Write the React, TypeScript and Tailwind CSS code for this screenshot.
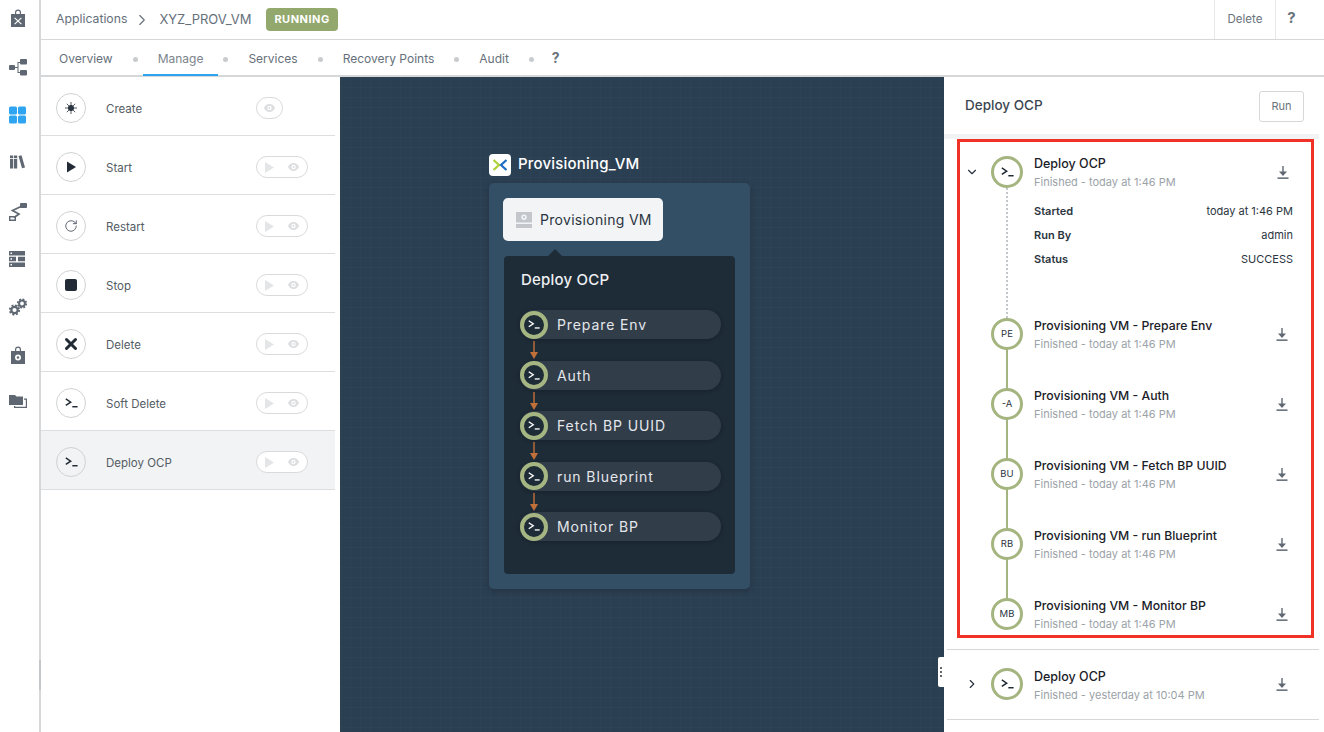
import React from 'react';
import { ChevronDown, ChevronRight, RotateCw, X } from 'lucide-react';

const tabs = ['Overview', 'Manage', 'Services', 'Recovery Points', 'Audit'];

function Terminal({ className = '' }: { className?: string }) {
    return (
        <svg viewBox="0 0 16 12" className={className} fill="none" stroke="currentColor" strokeWidth="1.8">
            <path d="M1 1 L7 5 L1 9" strokeLinejoin="miter" />
            <path d="M9 10.600 H15.500" />
        </svg>
    );
}

function Play({ className = '' }: { className?: string }) {
    return (
        <svg viewBox="0 0 10 12" className={className} fill="currentColor">
            <path d="M0 0 L10 6 L0 12 Z" />
        </svg>
    );
}

function SmallEye() {
    return (
        <svg viewBox="0 0 14 10" className="w-[11px] h-[8px] text-[#dcdee0]" fill="currentColor">
            <path fillRule="evenodd" d="M7 0C3.8 0 1.2 2 0 5c1.2 3 3.8 5 7 5s5.8-2 7-5c-1.200-3-3.800-5-7-5zm0 2.200a2.800 2.800 0 1 1 0 5.600 2.800 2.800 0 0 1 0-5.600z" />
            <circle cx="7" cy="5" r="1.300" />
        </svg>
    );
}

function DownloadIcon({ className = '' }: { className?: string }) {
    return (
        <svg viewBox="0 0 12 13" className={`w-[12px] h-[13px] shrink-0 text-[#5f6872] ${className}`} fill="currentColor">
            <rect x="5.300" y="0" width="1.400" height="6" />
            <path d="M2 5.500h8l-4 4.500z" />
            <rect x="0.500" y="11.400" width="11" height="1.500" />
        </svg>
    );
}

function RailIcon({ children, active = false, nudge = '' }: { children: React.ReactNode; active?: boolean; nudge?: string }) {
    return (
        <div className={`h-[48.5px] flex items-center justify-center pr-[3px] ${active ? 'text-[#2fa4f0]' : 'text-[#5f6872]'}`}>
            <svg viewBox="0 0 18 18" className={`w-[18px] h-[18px] ${nudge}`} fill="currentColor">
                {children}
            </svg>
        </div>
    );
}

function Rail() {
    return (
        <div className="w-[41px] shrink-0 border-r-2 border-[#d5d7d9] relative">
            <div className="-mt-[6px]">
                <RailIcon>
                    <path d="M6 5V3.500a3 3 0 0 1 6 0V5h-1.200V3.500a1.800 1.800 0 0 0-3.600 0V5z" />
                    <path fillRule="evenodd" d="M2 5h14v13H2zM6 8.500l-.8.800L8.200 12l-3 2.700.8.800L9 12.800l3 2.700.8-.8-3-2.700 3-2.700-.8-.8L9 11.200z" />
                </RailIcon>
                <RailIcon>
                    <rect x="0" y="7" width="6" height="5" rx="1" />
                    <rect x="11" y="1" width="7" height="5.500" rx="1" />
                    <rect x="11" y="12" width="7" height="5.500" rx="1" />
                    <path d="M6 9h2.500V4h2.500v1H9.500v9H11v1H8.500v-5H6z" />
                </RailIcon>
                <RailIcon active>
                    <rect x="0" y="0.500" width="8" height="8" rx="1.500" />
                    <rect x="9" y="0.500" width="8" height="8" rx="1.500" />
                    <rect x="0" y="9.500" width="8" height="8" rx="1.500" />
                    <rect x="9" y="9.500" width="8" height="8" rx="1.500" />
                </RailIcon>
                <RailIcon>
                    <rect x="1" y="0.500" width="3.200" height="13" />
                    <rect x="5" y="0.500" width="3.200" height="13" />
                    <rect x="1" y="3" width="7.200" height="0.800" fill="#fff" />
                    <path d="M9.500 1l3-.8L16 12.500l-3 .8z" />
                </RailIcon>
                <RailIcon>
                    <rect x="11" y="0" width="7" height="5" rx="0.800" />
                    <path fillRule="evenodd" d="M0 13h7v5H0zM1.400 14.400v2.200h4.200v-2.200z" />
                    <path d="M12 3.500 L3.500 7.500 L10 11 L5 14.500" fill="none" stroke="currentColor" strokeWidth="1.700" />
                </RailIcon>
                <RailIcon nudge="-mt-[3px]">
                    <path fillRule="evenodd" d="M0 1h16v4.500H0zM1.500 2.500V4H3V2.500zM0 6.700h7v4.500H0zm9 0h7v4.500H9zM1.500 8.200v1.500H3V8.200zM0 12.500h16V17H0zM1.500 14v1.500H3V14z" />
                </RailIcon>
                <RailIcon nudge="-mt-[4px]">
                    <g fill="none" stroke="currentColor">
                        <circle cx="5.500" cy="12" r="3.200" strokeWidth="2.200" />
                        <circle cx="5.500" cy="12" r="4.700" strokeWidth="1.800" strokeDasharray="2 1.700" />
                        <circle cx="13" cy="5.500" r="2.900" strokeWidth="2" />
                        <circle cx="13" cy="5.500" r="4.300" strokeWidth="1.700" strokeDasharray="1.800 1.580" />
                    </g>
                </RailIcon>
                <RailIcon nudge="-mt-[5px]">
                    <path d="M6 5V3.500a3 3 0 0 1 6 0V5h-1.200V3.500a1.800 1.800 0 0 0-3.600 0V5z" />
                    <path fillRule="evenodd" d="M2 5h14v13H2zM9 8.500a3 3 0 1 0 0 6 3 3 0 0 0 0-6z" />
                    <circle cx="9" cy="11.500" r="1.200" />
                </RailIcon>
                <RailIcon nudge="-mt-[6px]">
                    <path d="M0 1h6l1.500 1.500H14V11H0z" />
                    <path d="M15 4.500h3V14H5v-2h1.200v.800h10.600V5.700H15z" />
                </RailIcon>
            </div>
            <div className="absolute right-[-2px] top-[660px] w-[2px] h-[30px] bg-[#c4c7ca]" />
        </div>
    );
}

function TopBar() {
    return (
        <div className="h-[40px] shrink-0 border-b border-[#d5d7d9] flex items-center pl-[15px] text-[#66707a]">
            <span className="text-[12.250px]">Applications</span>
            <ChevronRight className="w-[18px] h-[18px] ml-[6px] mr-[8px]" strokeWidth={1.500} />
            <span className="mr-[15px] text-[13px]">XYZ_PROV_VM</span>
            <span className="bg-[#93a86c] text-white text-[11px] font-bold tracking-[0.5px] rounded-[4px] h-[23px] px-[8px] flex items-center">RUNNING</span>
            <div className="ml-auto flex h-full">
                <div className="w-[61px] border-l border-[#e6e8e9] flex items-center justify-center text-[11.500px] text-[#6a737c]">Delete</div>
                <div className="w-[49px] border-l border-[#e6e8e9] flex items-start justify-center pr-[17px] pt-[7px] text-[15px] font-bold text-[#6a737c]">?</div>
            </div>
        </div>
    );
}

function Tabs() {
    return (
        <div className="h-[37px] shrink-0 border-b-2 border-[#d5d7d9] flex items-start pl-[3px] text-[12px] text-[#66707a]">
            {tabs.map((t) => (
                <React.Fragment key={t}>
                    <div className={`h-[36px] px-[15px] pt-[10px] leading-[18px] ${t === 'Manage' ? 'border-b-2 border-[#2fa4f0] text-[#7b848c]' : ''}`}>{t}</div>
                    <div className="w-[5px] h-[5px] rounded-full bg-[#c9ccce] mt-[17px] mx-[5px]" />
                </React.Fragment>
            ))}
            <div className="pl-[13px] pt-[9px] text-[14px] font-bold text-[#6a737c] leading-[18px]">?</div>
        </div>
    );
}

function ActionIcon({ name }: { name: string }) {
    if (name === 'Create')
        return (
            <svg viewBox="0 0 12 12" className="w-[12px] h-[12px]" fill="#2b3540" stroke="#2b3540" strokeWidth="1">
                <circle cx="6" cy="6" r="2.600" />
                <path d="M6 0v12M0 6h12M1.800 1.800l8.400 8.400M10.200 1.800l-8.400 8.400" strokeWidth="0.800" />
            </svg>
        );
    if (name === 'Start') return <Play className="w-[9px] h-[12px] ml-[1px] text-[#222b35]" />;
    if (name === 'Restart') return <RotateCw className="w-[14px] h-[14px] text-[#4b5560]" strokeWidth={1.500} />;
    if (name === 'Stop') return <div className="w-[12px] h-[12px] rounded-[2px] bg-[#222b35]" />;
    if (name === 'Delete') return <X className="w-[18px] h-[18px] shrink-0 text-[#222b35]" strokeWidth={4} />;
    return <Terminal className="w-[13px] h-[10px] text-[#222b35]" />;
}

function ActionRow({ name, active = false }: { name: string; active?: boolean }) {
    return (
        <div className={`h-[59px] border-b border-[#dcdedf] flex items-center pl-[15px] pt-[4px] ${active ? 'bg-[#f2f3f5]' : ''}`}>
            <div className={`w-[30px] h-[30px] rounded-full border border-[#cfd2d4] flex items-center justify-center shrink-0 ${active ? '' : 'bg-white'}`}>
                <ActionIcon name={name} />
            </div>
            <div className="w-[170px] pl-[20px] text-[11.500px] text-[#545c64] pt-[4px]">{name}</div>
            {name === 'Create' ? (
                <div className="w-[27px] h-[22px] rounded-full border border-[#d8dadc] bg-white flex items-center justify-center">
                    <SmallEye />
                </div>
            ) : (
                <div className="w-[52px] h-[22px] rounded-full border border-[#d8dadc] bg-white flex items-center pl-[8px] gap-[14px]">
                    <Play className="w-[9px] h-[11px] text-[#e3e5e6]" />
                    <SmallEye />
                </div>
            )}
        </div>
    );
}

function ActionList() {
    return (
        <div className="w-[299px] shrink-0 bg-white">
            <div className="w-[294px]">
                {['Create', 'Start', 'Restart', 'Stop', 'Delete', 'Soft Delete'].map((n) => (
                    <ActionRow key={n} name={n} />
                ))}
                <ActionRow name="Deploy OCP" active />
            </div>
        </div>
    );
}

function Step({ label, last = false }: { label: string; last?: boolean }) {
    return (
        <div className="flex flex-col">
            <div className="h-[29px] w-[201px] rounded-full bg-[#323d4a] flex items-center shadow-[0_1px_4px_rgba(0,0,0,0.25)]">
                <div className="w-[28px] h-[28px] rounded-full border-[4px] border-[#a5b682] bg-[#1e2c38] flex items-center justify-center shrink-0">
                    <Terminal className="w-[12px] h-[9px] text-white" />
                </div>
                <span className="ml-[9px] text-[14px] tracking-[0.9px] text-[#e4e7ea]">{label}</span>
            </div>
            {!last && (
                <div className="h-[21.500px] w-[28px] flex justify-center pt-[2px]">
                    <svg viewBox="0 0 10 19" className="w-[10px] h-[19px]" fill="#c2703a">
                        <rect x="4.300" y="0" width="1.400" height="12" />
                        <path d="M1 11h8l-4 7z" />
                    </svg>
                </div>
            )}
        </div>
    );
}

function Canvas() {
    return (
        <div className="relative flex-1 bg-[#2b3f52] bg-[linear-gradient(rgba(255,255,255,0.014)_1px,transparent_1px),linear-gradient(90deg,rgba(255,255,255,0.014)_1px,transparent_1px)] bg-[size:10px_10px]">
            <div className="absolute left-[149px] top-[76px] w-[261px]">
                <div className="flex items-center h-[23px] mb-[7px]">
                    <div className="w-[22px] h-[22px] rounded-[4px] bg-white flex items-center justify-center">
                        <svg viewBox="0 0 14 12" className="w-[14px] h-[12px]" fill="none" strokeWidth="2.200">
                            <path d="M0.500 1 L6 6 L0.500 11" stroke="#afd136" />
                            <path d="M13.500 1 L8 6 L13.500 11" stroke="#1b6dc1" />
                        </svg>
                    </div>
                    <span className="ml-[7px] text-[15px] font-medium tracking-[0.2px] text-white">Provisioning_VM</span>
                </div>
                <div className="bg-[#324f66] rounded-[5px] h-[406px] pt-[15px] pl-[14px] shadow-[0_2px_6px_rgba(0,0,0,0.2)]">
                    <div className="w-[160px] h-[43px] rounded-[5px] bg-[#f3f4f6] flex items-center pl-[13px]">
                        <svg viewBox="0 0 16 16" className="w-[16px] h-[16px] shrink-0" fill="#c3c7cb">
                            <path fillRule="evenodd" d="M0 0h16v10.500H0zM8 2.500a2.700 2.700 0 1 0 0 5.400 2.700 2.700 0 0 0 0-5.400z" />
                            <circle cx="8" cy="5.200" r="1.100" />
                            <rect x="0" y="12" width="16" height="4" />
                        </svg>
                        <span className="ml-[8px] text-[14px] tracking-[0.3px] text-[#2a3540]">Provisioning VM</span>
                    </div>
                    <div className="relative mt-[15px] ml-[1px] w-[231px] h-[318px] bg-[#1e2c38] rounded-[4px] pt-[14px] pl-[17px]">
                        <div className="absolute left-[44px] top-[-7px] w-0 h-0 border-l-[7px] border-r-[7px] border-b-[7px] border-l-transparent border-r-transparent border-b-[#1e2c38]" />
                        <div className="text-[15px] font-medium tracking-[0.2px] text-[#eef0f2] leading-[20px]">Deploy OCP</div>
                        <div className="mt-[20px] -ml-[1px]">
                            <Step label="Prepare Env" />
                            <Step label="Auth" />
                            <Step label="Fetch BP UUID" />
                            <Step label="run Blueprint" />
                            <Step label="Monitor BP" last />
                        </div>
                    </div>
                </div>
            </div>
            <div className="absolute right-0 top-[580px] w-[6px] h-[30px] rounded-l-[2px] bg-white flex flex-col items-center justify-center gap-[2px]">
                <span className="w-[2px] h-[2px] bg-[#666]" />
                <span className="w-[2px] h-[2px] bg-[#666]" />
                <span className="w-[2px] h-[2px] bg-[#666]" />
            </div>
        </div>
    );
}

function Ring({ children }: { children: React.ReactNode }) {
    return (
        <div className="w-[32px] h-[32px] rounded-full border-[3px] border-[#a5b57f] bg-white flex items-center justify-center shrink-0 relative z-10">
            {children}
        </div>
    );
}

function RunEntry({ code, name, last = false }: { code: string; name: string; last?: boolean }) {
    return (
        <div className={`flex pl-[31px] pr-[23px] relative ${last ? 'h-[36px]' : 'h-[70px]'}`}>
            <div className="relative w-[32px] shrink-0">
                <Ring><span className="text-[9.500px] text-[#2b3540]">{code}</span></Ring>
                {!last && <div className="absolute left-[15px] top-[30px] w-[2px] h-[42px] bg-[#a5b57f]" />}
            </div>
            <div className="ml-[11px] flex-1">
                <div className="text-[12.250px] font-medium leading-[16px] text-[#1a2027]">{name}</div>
                <div className="text-[11px] leading-[16px] mt-[2px] text-[#9ba2a8]">Finished - today at 1:46 PM</div>
            </div>
            <DownloadIcon className="mt-[10px]" />
        </div>
    );
}

function DetailRow({ label, value }: { label: string; value: string }) {
    return (
        <div className="h-[24px] flex items-center justify-between text-[11px] text-[#2b3540]">
            <span className="font-semibold">{label}</span>
            <span>{value}</span>
        </div>
    );
}

function RunPanel() {
    return (
        <div className="w-[380px] shrink-0 bg-white">
            <div className="h-[57px] flex items-center justify-between pl-[21px] pr-[20px]">
                <span className="text-[13.500px] font-medium text-[#3c4650]">Deploy OCP</span>
                <div className="mt-[2px] w-[45px] h-[31px] rounded-[3px] border border-[#d5d7d9] flex items-center justify-center text-[11px] text-[#6a737c]">Run</div>
            </div>
            <div className="h-[5px] mr-[5px] bg-[#f2f3f5]" />
            <div className="ml-[13px] w-[357px] h-[499px] border-[3px] border-[#f03226]">
                <div className="h-[176px] flex pt-[14px] pl-[5px] pr-[18px] relative">
                    <ChevronDown className="w-[14px] h-[14px] mt-[9px] text-[#2b3540] shrink-0" strokeWidth={2} />
                    <div className="relative w-[32px] ml-[12px] shrink-0">
                        <Ring><Terminal className="w-[13px] h-[10px] text-[#1f2933]" /></Ring>
                        <div className="absolute left-[15px] top-[32px] h-[130px] border-l-2 border-dotted border-[#c4c7ca]" />
                    </div>
                    <div className="ml-[11px] flex-1">
                        <div className="flex justify-between">
                            <div>
                                <div className="text-[12.500px] font-medium leading-[16px] text-[#1a2027]">Deploy OCP</div>
                                <div className="text-[11px] leading-[16px] mt-[2px] text-[#9ba2a8]">Finished - today at 1:46 PM</div>
                            </div>
                            <DownloadIcon className="mt-[10px] mr-[4px]" />
                        </div>
                        <div className="mt-[9px]">
                            <DetailRow label="Started" value="today at 1:46 PM" />
                            <DetailRow label="Run By" value="admin" />
                            <DetailRow label="Status" value="SUCCESS" />
                        </div>
                    </div>
                </div>
                <RunEntry code="PE" name="Provisioning VM - Prepare Env" />
                <RunEntry code="-A" name="Provisioning VM - Auth" />
                <RunEntry code="BU" name="Provisioning VM - Fetch BP UUID" />
                <RunEntry code="RB" name="Provisioning VM - run Blueprint" />
                <RunEntry code="MB" name="Provisioning VM - Monitor BP" last />
            </div>
            <div className="mt-[11px] ml-[3px] mr-[5px] h-[71px] border-t border-b border-[#d5d7d9] flex pt-[19px] pl-[18px] pr-[31px]">
                <ChevronRight className="w-[14px] h-[14px] mt-[8px] text-[#2b3540] shrink-0" strokeWidth={2} />
                <div className="ml-[12px] -mt-[1px]"><Ring><Terminal className="w-[13px] h-[10px] text-[#1f2933]" /></Ring></div>
                <div className="ml-[11px] flex-1">
                    <div className="text-[12.500px] font-medium leading-[16px] text-[#1a2027]">Deploy OCP</div>
                    <div className="text-[11px] leading-[16px] mt-[2px] text-[#9ba2a8]">Finished - yesterday at 10:04 PM</div>
                </div>
                <DownloadIcon className="mt-[9px]" />
            </div>
        </div>
    );
}

export default function App() {
    return (
        <div className="flex w-[1324px] h-[732px] overflow-hidden bg-white font-['Inter',sans-serif]">
            <Rail />
            <div className="flex-1 flex flex-col min-w-0">
                <TopBar />
                <Tabs />
                <div className="flex flex-1 min-h-0">
                    <ActionList />
                    <Canvas />
                    <RunPanel />
                </div>
            </div>
        </div>
    );
}
